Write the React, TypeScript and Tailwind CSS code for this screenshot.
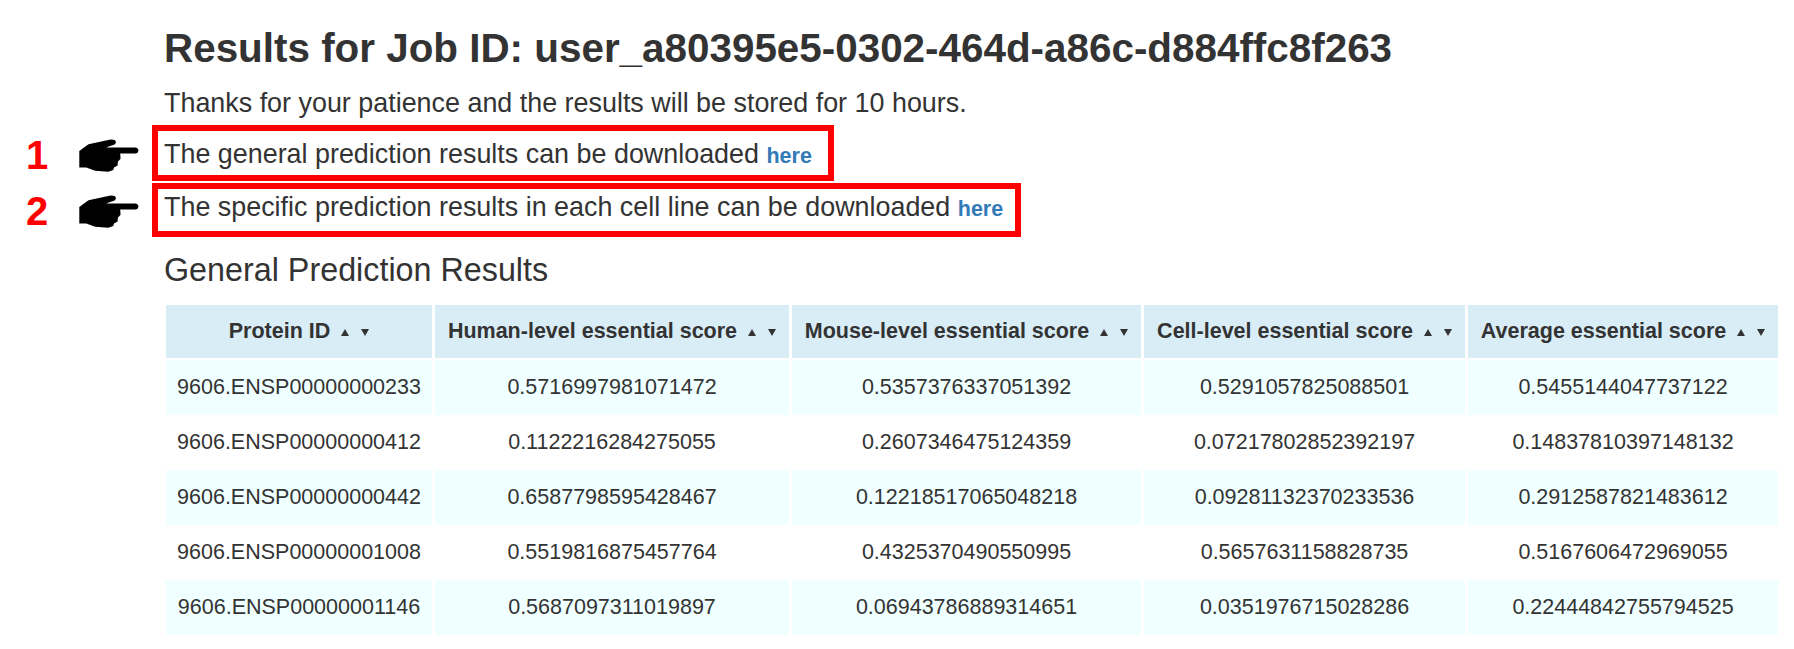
const columns = [
  { label: "Protein ID", width: "w-[266px]" },
  { label: "Human-level essential score", width: "w-[354px]" },
  { label: "Mouse-level essential score", width: "w-[349px]" },
  { label: "Cell-level essential score", width: "w-[321px]" },
  { label: "Average essential score", width: "w-[310px]" },
];

const rows = [
  ["9606.ENSP00000000233", "0.5716997981071472", "0.5357376337051392", "0.5291057825088501", "0.5455144047737122"],
  ["9606.ENSP00000000412", "0.1122216284275055", "0.2607346475124359", "0.07217802852392197", "0.14837810397148132"],
  ["9606.ENSP00000000442", "0.6587798595428467", "0.12218517065048218", "0.09281132370233536", "0.2912587821483612"],
  ["9606.ENSP00000001008", "0.5519816875457764", "0.4325370490550995", "0.5657631158828735", "0.5167606472969055"],
  ["9606.ENSP00000001146", "0.5687097311019897", "0.06943786889314651", "0.0351976715028286", "0.22444842755794525"],
];

function Hand({ className }: { className: string }) {
  return (
    <svg viewBox="207 56 180 100" className={className} fill="#000">
      <path d="M207 92 L235 72 L298 58 Q316 56 318 65 Q318 73 305 76 L288 82 L376 82 Q386 83 386 91 Q386 100 376 100 L331 100 L332 116 L324 125 L323 136 L312 142 L310 150 L295 155 L255 152 L228 142 L207 142 Z" />
    </svg>
  );
}

function SortArrows() {
  return (
    <span className="ml-[11px] inline-flex items-center gap-[12px] align-middle">
      <svg viewBox="0 0 8 7" className="h-[7px] w-[8px]" fill="#333">
        <path d="M4 0 L8 7 L0 7 Z" />
      </svg>
      <svg viewBox="0 0 8 7" className="h-[7px] w-[8px]" fill="#333">
        <path d="M0 0 L8 0 L4 7 Z" />
      </svg>
    </span>
  );
}

function Annotation({ number, top }: { number: string; top: string }) {
  return (
    <div className={`absolute left-[26px] ${top} flex h-[40px] w-[114px] items-center`}>
      <span className="w-[53px] text-[40px] leading-none font-bold text-[#ff0000]">{number}</span>
      <Hand className="h-[33px] w-[60px]" />
    </div>
  );
}

export default function App() {
  return (
    <div className="relative h-[649px] w-[1794px] overflow-hidden bg-white pt-[19px] pl-[164px] font-['Liberation_Sans',Arial,sans-serif] text-[#333]">
      <h2 className="text-[40.4px] leading-[58px] font-bold">
        Results for Job ID: user_a80395e5-0302-464d-a86c-d884ffc8f263
      </h2>
      <p className="mt-[1px] text-[26.9px] leading-[51px]">
        Thanks for your patience and the results will be stored for 10 hours.
      </p>
      <p className="text-[26.9px] leading-[51px]">
        The general prediction results can be downloaded{" "}
        <a className="text-[21.5px] font-bold text-[#337ab7]">here</a>
      </p>
      <p className="text-[26.9px] leading-[51px]">
        The specific prediction results in each cell line can be downloaded{" "}
        <a className="text-[21.5px] font-bold text-[#337ab7]">here</a>
      </p>
      <h3 className="mt-[12px] text-[32.3px] leading-[46px]">General Prediction Results</h3>

      <table className="mt-[12px] table-fixed border-separate border-spacing-x-[3px] border-spacing-y-0 -ml-[1px] text-[21.5px]">
        <thead>
          <tr>
            {columns.map((col) => (
              <th key={col.label} className={`${col.width} h-[53px] bg-[#d9edf7] p-0 pb-[1px] text-center font-bold whitespace-nowrap`}>
                {col.label}
                <SortArrows />
              </th>
            ))}
          </tr>
          <tr className="h-[2px]" />
        </thead>
        <tbody>
          {rows.map((row, i) => (
            <tr key={row[0]}>
              {row.map((cell) => (
                <td key={cell} className={`h-[55px] p-0 text-center ${i % 2 === 0 ? "bg-[#f0ffff]" : "bg-white"}`}>
                  {cell}
                </td>
              ))}
            </tr>
          ))}
        </tbody>
      </table>

      <div className="absolute top-[125px] left-[152px] h-[56px] w-[682px] border-[6px] border-[#ff0000]" />
      <div className="absolute top-[183px] left-[152px] h-[54px] w-[869px] border-[6px] border-[#ff0000]" />
      <Annotation number="1" top="top-[135px]" />
      <Annotation number="2" top="top-[191px]" />
    </div>
  );
}
